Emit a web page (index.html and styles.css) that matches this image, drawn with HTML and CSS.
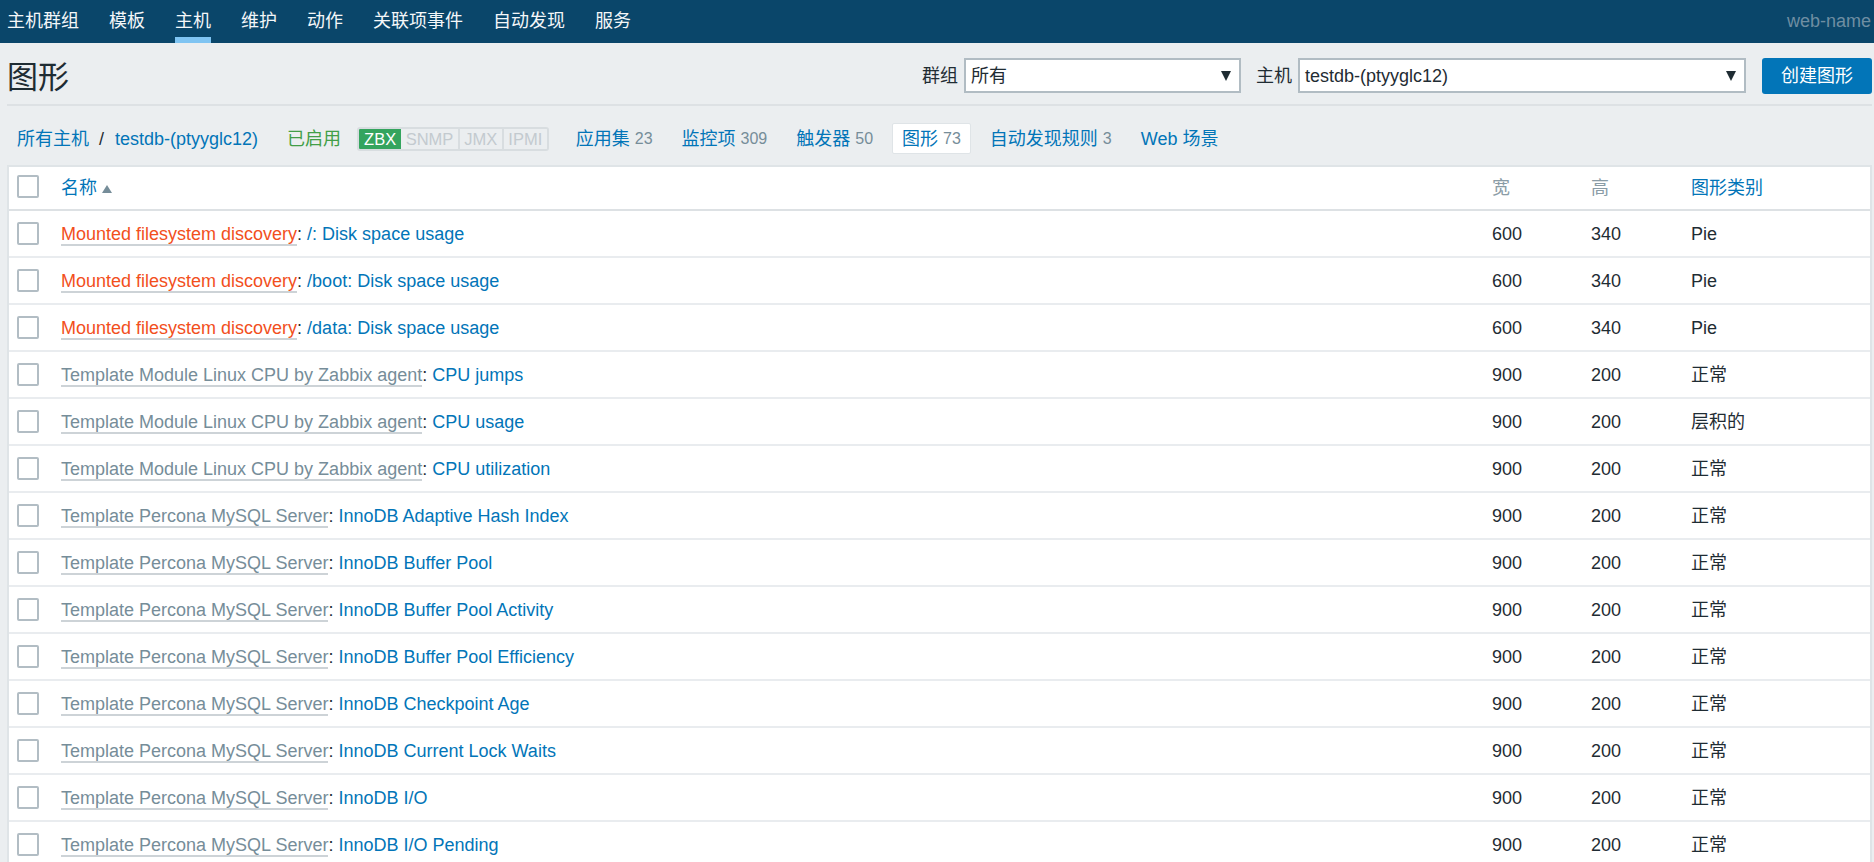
FILE: index.html
```html
<!DOCTYPE html>
<html lang="zh-CN">
<head>
<meta charset="utf-8">
<title>图形</title>
<link rel="stylesheet" href="styles.css">
</head>
<body>
<nav class="topnav">
  <ul class="menu">
    <li><a href="#">主机群组</a></li>
    <li><a href="#">模板</a></li>
    <li class="active"><a href="#">主机</a></li>
    <li><a href="#">维护</a></li>
    <li><a href="#">动作</a></li>
    <li><a href="#">关联项事件</a></li>
    <li><a href="#">自动发现</a></li>
    <li><a href="#">服务</a></li>
  </ul>
  <div class="server">web-name</div>
</nav>
<main class="wrapper">
  <header class="page-header">
    <h1>图形</h1>
    <div class="filters">
      <label class="flabel">群组</label>
      <div class="select select-group"><span>所有</span><i class="caret"></i></div>
      <label class="flabel lbl-host">主机</label>
      <div class="select select-host"><span>testdb-(ptyyglc12)</span><i class="caret"></i></div>
      <button class="btn">创建图形</button>
    </div>
  </header>

  <div class="subnav">
    <ul class="crumbs">
      <li><a href="#">所有主机</a></li>
      <li class="sep">/</li>
      <li><a href="#">testdb-(ptyyglc12)</a></li>
    </ul>
    <span class="status-on">已启用</span>
    <div class="badges">
      <span class="badge on">ZBX</span><span class="badge">SNMP</span><span class="badge">JMX</span><span class="badge last">IPMI</span>
    </div>
    <ul class="tabs">
      <li><a href="#">应用集</a><span class="cnt">23</span></li>
      <li><a href="#">监控项</a><span class="cnt">309</span></li>
      <li><a href="#">触发器</a><span class="cnt">50</span></li>
      <li class="selected"><a href="#">图形</a><span class="cnt">73</span></li>
      <li><a href="#">自动发现规则</a><span class="cnt">3</span></li>
      <li><a href="#">Web 场景</a></li>
    </ul>
  </div>

  <table class="list">
    <colgroup>
      <col class="c-check"><col><col class="c-w"><col class="c-h"><col class="c-type">
    </colgroup>
    <thead>
      <tr>
        <th class="cell-check"><span class="cb"></span></th>
        <th><a href="#" class="sort">名称</a><i class="sort-up"></i></th>
        <th class="muted">宽</th>
        <th class="muted">高</th>
        <th><a href="#">图形类别</a></th>
      </tr>
    </thead>
    <tbody>
      <tr><td class="cell-check"><span class="cb"></span></td><td><a class="pre red" href="#">Mounted filesystem discovery</a>: <a href="#">/: Disk space usage</a></td><td>600</td><td>340</td><td>Pie</td></tr>
      <tr><td class="cell-check"><span class="cb"></span></td><td><a class="pre red" href="#">Mounted filesystem discovery</a>: <a href="#">/boot: Disk space usage</a></td><td>600</td><td>340</td><td>Pie</td></tr>
      <tr><td class="cell-check"><span class="cb"></span></td><td><a class="pre red" href="#">Mounted filesystem discovery</a>: <a href="#">/data: Disk space usage</a></td><td>600</td><td>340</td><td>Pie</td></tr>
      <tr><td class="cell-check"><span class="cb"></span></td><td><a class="pre" href="#">Template Module Linux CPU by Zabbix agent</a>: <a href="#">CPU jumps</a></td><td>900</td><td>200</td><td>正常</td></tr>
      <tr><td class="cell-check"><span class="cb"></span></td><td><a class="pre" href="#">Template Module Linux CPU by Zabbix agent</a>: <a href="#">CPU usage</a></td><td>900</td><td>200</td><td>层积的</td></tr>
      <tr><td class="cell-check"><span class="cb"></span></td><td><a class="pre" href="#">Template Module Linux CPU by Zabbix agent</a>: <a href="#">CPU utilization</a></td><td>900</td><td>200</td><td>正常</td></tr>
      <tr><td class="cell-check"><span class="cb"></span></td><td><a class="pre" href="#">Template Percona MySQL Server</a>: <a href="#">InnoDB Adaptive Hash Index</a></td><td>900</td><td>200</td><td>正常</td></tr>
      <tr><td class="cell-check"><span class="cb"></span></td><td><a class="pre" href="#">Template Percona MySQL Server</a>: <a href="#">InnoDB Buffer Pool</a></td><td>900</td><td>200</td><td>正常</td></tr>
      <tr><td class="cell-check"><span class="cb"></span></td><td><a class="pre" href="#">Template Percona MySQL Server</a>: <a href="#">InnoDB Buffer Pool Activity</a></td><td>900</td><td>200</td><td>正常</td></tr>
      <tr><td class="cell-check"><span class="cb"></span></td><td><a class="pre" href="#">Template Percona MySQL Server</a>: <a href="#">InnoDB Buffer Pool Efficiency</a></td><td>900</td><td>200</td><td>正常</td></tr>
      <tr><td class="cell-check"><span class="cb"></span></td><td><a class="pre" href="#">Template Percona MySQL Server</a>: <a href="#">InnoDB Checkpoint Age</a></td><td>900</td><td>200</td><td>正常</td></tr>
      <tr><td class="cell-check"><span class="cb"></span></td><td><a class="pre" href="#">Template Percona MySQL Server</a>: <a href="#">InnoDB Current Lock Waits</a></td><td>900</td><td>200</td><td>正常</td></tr>
      <tr><td class="cell-check"><span class="cb"></span></td><td><a class="pre" href="#">Template Percona MySQL Server</a>: <a href="#">InnoDB I/O</a></td><td>900</td><td>200</td><td>正常</td></tr>
      <tr><td class="cell-check"><span class="cb"></span></td><td><a class="pre" href="#">Template Percona MySQL Server</a>: <a href="#">InnoDB I/O Pending</a></td><td>900</td><td>200</td><td>正常</td></tr>
    </tbody>
  </table>
</main>
</body>
</html>
```

FILE: styles.css
```css
* { box-sizing: border-box; }

html, body {
  margin: 0;
  padding: 0;
}

body {
  background: #ebeef0;
  color: #1f2c33;
  font-family: "Liberation Sans", "Noto Sans CJK SC", sans-serif;
  font-size: 18px;
  line-height: 22px;
  overflow: hidden;
}

a {
  color: #0275b8;
  text-decoration: none;
}

ul {
  list-style: none;
  margin: 0;
  padding: 0;
}

/* top navigation */
.topnav {
  display: flex;
  justify-content: space-between;
  align-items: stretch;
  height: 43px;
  background: #0a466a;
  padding: 0 3px 0 7px;
}

.menu {
  display: flex;
  gap: 30px;
}

.menu li {
  display: flex;
}

.menu a {
  display: flex;
  align-items: center;
  padding-bottom: 2px;
  color: #f4f7f9;
}

.menu li.active a {
  box-shadow: inset 0 -6px 0 #7fc4f2;
}

.server {
  display: flex;
  align-items: center;
  padding-bottom: 2px;
  color: #6f8ea2;
}

/* page content */
.wrapper {
  padding: 0 2px 0 7px;
}

.page-header {
  display: flex;
  justify-content: space-between;
  align-items: center;
  height: 63px;
  padding-top: 4px;
  border-bottom: 2px solid #dde1e4;
}

.page-header h1 {
  margin: 0;
  padding-top: 4px;
  font-size: 31px;
  line-height: 36px;
  font-weight: normal;
  color: #1f2c33;
}

.filters {
  display: flex;
  align-items: center;
}

.flabel {
  margin-right: 6px;
}

.lbl-host {
  margin-left: 15px;
}

.select {
  display: flex;
  align-items: center;
  justify-content: space-between;
  height: 35px;
  background: #fff;
  border: 2px solid #b1bcc3;
  padding: 0 8px 0 5px;
}

.select-group { width: 277px; }
.select-host { width: 448px; }

.caret {
  width: 0;
  height: 0;
  border-left: 5px solid transparent;
  border-right: 5px solid transparent;
  border-top: 10px solid #1f2c33;
}

.btn {
  margin-left: 16px;
  height: 36px;
  padding: 0 19px;
  background: #0275b8;
  color: #fff;
  border: 0;
  border-radius: 3px;
  font-family: inherit;
  font-size: 18px;
  line-height: 22px;
}

/* sub navigation */
.subnav {
  display: flex;
  align-items: center;
  height: 59px;
  padding: 17px 0 11px;
}

.crumbs {
  display: flex;
  align-items: center;
  padding-left: 10px;
}

.crumbs .sep {
  margin: 0 11px 0 10px;
  color: #1f2c33;
}

.status-on {
  margin-left: 29px;
  color: #429e47;
}

.badges {
  display: flex;
  margin-left: 16px;
  height: 24px;
  border: 2px solid #d8dde0;
  border-radius: 3px;
  overflow: hidden;
  font-size: 16.5px;
  line-height: 20px;
}

.badge {
  padding: 0 4.5px;
  color: #c3cacf;
  background: #ebeef0;
  border-right: 2px solid #d8dde0;
}

.badge.last { border-right: 0; }

.badge.on {
  background: #34a45e;
  color: #fff;
  border-right: 0;
  padding: 0 5px;
}

.tabs {
  display: flex;
  gap: 9px;
  margin-left: 17px;
}

.tabs li {
  display: flex;
  align-items: center;
  height: 31px;
  padding: 0 10px;
}

.tabs li.selected {
  background: #fff;
  border: 1px solid #dfe4e7;
  border-radius: 2px;
  padding: 0 9px;
}

.cnt {
  margin-left: 5px;
  font-size: 16px;
  color: #768d99;
}

/* list table */
.list {
  width: 100%;
  table-layout: fixed;
  border-collapse: separate;
  border-spacing: 0;
  background: #fff;
  border: 2px solid #dfe4e7;
  border-bottom: 0;
}

.c-check { width: 47px; }
.c-w { width: 99px; }
.c-h { width: 100px; }
.c-type { width: 184px; }

.list th {
  height: 44px;
  padding: 0 5px;
  text-align: left;
  font-weight: normal;
  vertical-align: middle;
  border-bottom: 2px solid #dde1e4;
}

.list th.muted {
  color: #8a9ca6;
}

.list td {
  height: 47px;
  padding: 0 5px;
  vertical-align: middle;
  border-bottom: 2px solid #e9ecef;
  white-space: nowrap;
}

.list .cell-check {
  padding: 0 0 0 8px;
}

.list th.cell-check {
  padding-bottom: 4px;
}

.cb {
  display: block;
  width: 22px;
  height: 23px;
  border: 2px solid #b2bdc4;
  border-radius: 2px;
  background: #fff;
}

.sort-up {
  display: inline-block;
  margin-left: 5px;
  width: 0;
  height: 0;
  border-left: 5.5px solid transparent;
  border-right: 5.5px solid transparent;
  border-bottom: 8px solid #768d99;
  vertical-align: 1px;
}

.pre {
  color: #768d99;
  border-bottom: 2px solid #cdd3d7;
}

.pre.red {
  color: #f24f1d;
}
```
